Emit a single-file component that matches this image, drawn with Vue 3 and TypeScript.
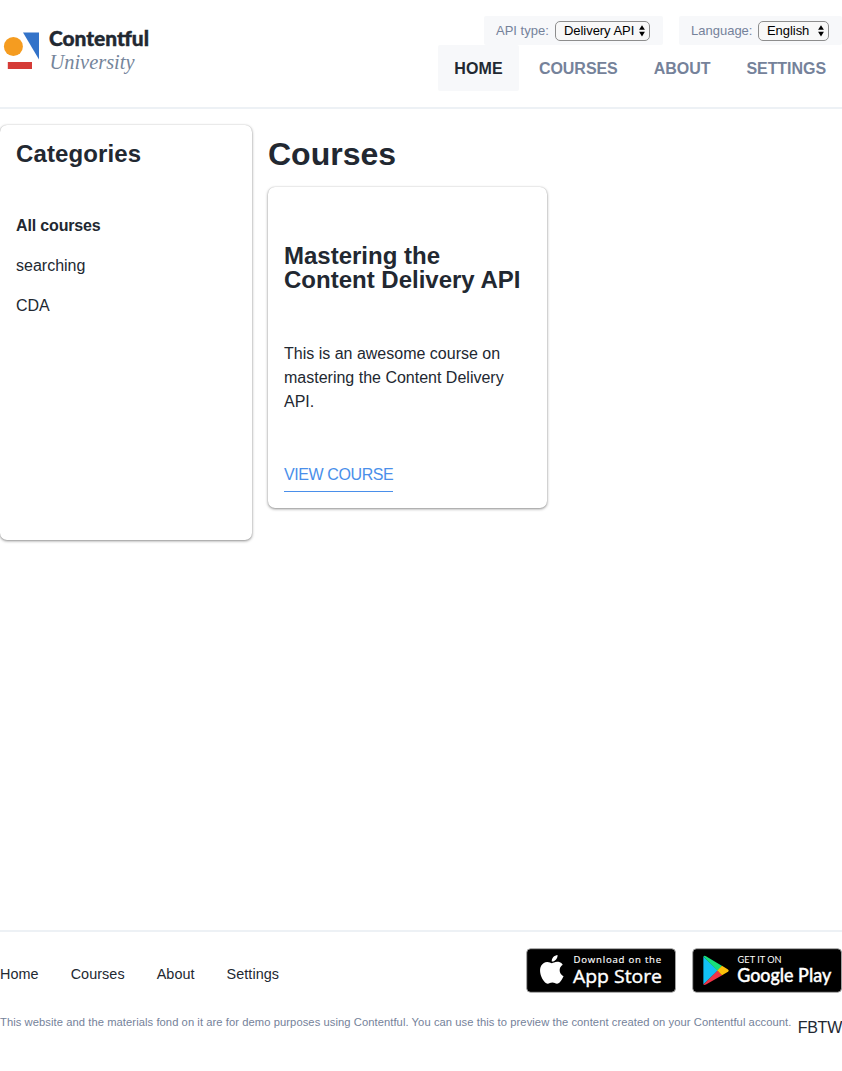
<script setup lang="ts">
interface NavLink {
  label: string
  active?: boolean
}

const navLinks: NavLink[] = [
  { label: 'HOME', active: true },
  { label: 'COURSES' },
  { label: 'ABOUT' },
  { label: 'SETTINGS' },
]

const pickers = [
  { label: 'API type:', value: 'Delivery API', kind: 'api' },
  { label: 'Language:', value: 'English', kind: 'language' },
]

const categories = [
  { label: 'All courses', active: true },
  { label: 'searching', active: false },
  { label: 'CDA', active: false },
]

const footerLinks: string[] = ['Home', 'Courses', 'About', 'Settings']
</script>

<template>
  <div class="page">
    <header class="header">
      <svg class="logo" width="152" height="50" viewBox="0 0 152 50">
        <circle cx="13.4" cy="20.5" r="9.5" fill="#f59c20" />
        <path d="M23 6.5H39V33.5Z" fill="#3373c9" />
        <rect x="7.8" y="36" width="24.2" height="7" fill="#d53b37" />
        <text class="logo-name" x="49" y="20" textLength="100" lengthAdjust="spacingAndGlyphs">Contentful</text>
        <text class="logo-sub" x="49.5" y="43" textLength="85" lengthAdjust="spacingAndGlyphs">University</text>
      </svg>
      <div class="header-right">
        <div class="pickers">
          <div v-for="p in pickers" :key="p.kind" class="picker" :class="p.kind">
            <span class="picker-label">{{ p.label }}</span>
            <button class="select">
              <span>{{ p.value }}</span>
              <svg width="6" height="12" viewBox="0 0 6 12"><path d="M3 0.2L5.9 4.8H0.1ZM3 11.4L0.1 6.8H5.9Z" /></svg>
            </button>
          </div>
        </div>
        <nav class="nav">
          <a v-for="l in navLinks" :key="l.label" :class="{ active: l.active }">{{ l.label }}</a>
        </nav>
      </div>
    </header>

    <main class="main">
      <aside class="sidebar">
        <h2>Categories</h2>
        <ul>
          <li v-for="c in categories" :key="c.label" :class="{ active: c.active }">{{ c.label }}</li>
        </ul>
      </aside>
      <section class="content">
        <h1>Courses</h1>
        <article class="card">
          <h2>Mastering the Content Delivery API</h2>
          <p>This is an awesome course on mastering the Content Delivery API.</p>
          <a class="view">VIEW COURSE</a>
        </article>
      </section>
    </main>

    <footer class="footer">
      <div class="footer-top">
        <nav class="footer-nav">
          <a v-for="l in footerLinks" :key="l">{{ l }}</a>
        </nav>
        <div class="badges">
          <svg width="150" height="45" viewBox="0 0 150 45">
            <rect x="0.7" y="0.7" width="148.8" height="43.6" rx="4" fill="#000" stroke="#a6a6a6" stroke-width="0.9" />
            <path
              transform="translate(11.4 6.9) scale(1.2)"
              fill="#fff"
              d="M12.152 6.896c-.948 0-2.415-1.078-3.96-1.04-2.04.027-3.91 1.183-4.961 3.014-2.117 3.675-.546 9.103 1.519 12.09 1.013 1.454 2.208 3.09 3.792 3.039 1.52-.065 2.09-.987 3.935-.987 1.831 0 2.35.987 3.96.948 1.637-.026 2.676-1.48 3.676-2.948 1.156-1.688 1.636-3.325 1.662-3.415-.039-.013-3.182-1.221-3.22-4.857-.026-3.04 2.48-4.494 2.597-4.559-1.429-2.09-3.623-2.324-4.39-2.376-2-.156-3.675 1.09-4.61 1.09zM15.53 3.83c.843-1.012 1.4-2.427 1.245-3.83-1.207.052-2.662.805-3.532 1.818-.78.896-1.454 2.338-1.273 3.714 1.338.104 2.715-.688 3.559-1.701"
            />
            <text class="apple-small" x="47.6" y="14.6" textLength="87.5">Download on the</text>
            <text class="apple-big" x="47" y="35.2" textLength="89" lengthAdjust="spacingAndGlyphs">App Store</text>
          </svg>
          <svg width="150" height="45" viewBox="0 0 150 45">
            <rect x="0.7" y="0.7" width="148.8" height="43.6" rx="4" fill="#000" stroke="#a6a6a6" stroke-width="0.9" />
            <path d="M11.4 8.4V36.6L26 22.5Z" fill="#12c0f5" />
            <path d="M11.4 8.4Q12.5 7.4 14 8.3L30.2 18L25.6 22.7Z" fill="#18e07a" />
            <path d="M11.4 36.6Q12.5 37.4 14 36.6L30.2 27.2L25.6 22.4Z" fill="#f03448" />
            <path d="M30 17.8L36 21.4Q37.6 22.6 36 23.7L30 27.3L25.3 22.5Z" fill="#fdc00a" />
            <text class="google-small" x="45.6" y="14.5" textLength="44">GET IT ON</text>
            <text class="google-big" x="45.2" y="34" textLength="94" lengthAdjust="spacingAndGlyphs">Google Play</text>
          </svg>
        </div>
      </div>
      <div class="footer-bottom">
        <p>This website and the materials fond on it are for demo purposes using Contentful. You can use this to preview the content created on your Contentful account.</p>
        <div class="social">FBTW</div>
      </div>
    </footer>
  </div>
</template>

<style>
body {
  margin: 0;
  background: #fff;
}
</style>

<style scoped>
.page {
  width: 842px;
  height: 1071px;
  display: flex;
  flex-direction: column;
  overflow: hidden;
  font: 16px/24px 'Liberation Sans', Arial, sans-serif;
  color: #222831;
  white-space: nowrap;
}
h1, h2, p, ul {
  margin: 0;
  padding: 0;
}
.header {
  box-sizing: border-box;
  height: 109px;
  padding-top: 16px;
  border-bottom: 2px solid #edf1f5;
  display: flex;
  justify-content: space-between;
}
.logo {
  margin-top: 10px;
}
.logo-name {
  font: 900 20px Lato, sans-serif;
  fill: #222831;
  stroke: #222831;
  stroke-width: 0.4;
}
.logo-sub {
  font: italic 21.5px 'Liberation Serif', serif;
  fill: #75859b;
}
.header-right {
  display: flex;
  flex-direction: column;
  align-items: flex-end;
}
.pickers {
  display: flex;
  gap: 16px;
}
.picker {
  box-sizing: border-box;
  height: 29px;
  padding: 0 13px 0 12px;
  display: flex;
  align-items: center;
  justify-content: space-between;
  background: #f7f8fa;
  border-radius: 2px;
  font-size: 13px;
  color: #75829a;
}
.api { width: 179px; }
.language { width: 163px; }
.select {
  box-sizing: border-box;
  height: 20px;
  width: 95px;
  margin: 1px 0 0;
  padding: 0 4px 1px 8px;
  display: flex;
  align-items: center;
  justify-content: space-between;
  border: 1px solid #8d8d8d;
  border-radius: 5px;
  background: #f8f8f8;
  color: #000;
  font: 13px 'Liberation Sans', Arial, sans-serif;
  letter-spacing: -0.05px;
}
.language .select { width: 71px; }
.nav {
  display: flex;
  gap: 4px;
}
.nav a {
  height: 46px;
  line-height: 48px;
  padding: 0 16px;
  border-radius: 2px;
  font-weight: 700;
  color: #75829a;
  letter-spacing: -0.05px;
}
.nav a.active {
  background: #f7f8fa;
  color: #222831;
  letter-spacing: 0.2px;
}
.main {
  display: flex;
  gap: 16px;
  height: 805px;
  padding-top: 16px;
}
.sidebar,
.card {
  box-sizing: border-box;
  border-radius: 7px;
  background: #fff;
  box-shadow: 0 1px 3px rgba(0, 0, 0, 0.45), 0 0 1px rgba(0, 0, 0, 0.2);
}
.sidebar {
  width: 252px;
  height: 415px;
  padding: 17px 16px 16px;
}
h2 {
  font-size: 24px;
  line-height: 24px;
}
.sidebar h2 {
  letter-spacing: 0.12px;
}
ul {
  margin-top: 40px;
  list-style: none;
}
li {
  line-height: 40px;
}
li.active {
  font-weight: 700;
  letter-spacing: -0.15px;
}
h1 {
  margin: 13px 0 17px;
  font-size: 32px;
  line-height: 32px;
}
.card {
  width: 279px;
  height: 321px;
  padding: 57px 16px 0;
  white-space: normal;
}
.card p {
  margin: 50px 0 43px;
}
.view {
  display: inline-block;
  height: 34px;
  line-height: 36px;
  border-bottom: 1px solid #4a8fea;
  color: #4a8fea;
  letter-spacing: -0.4px;
}
.footer {
  border-top: 2px solid #edf1f5;
  padding-top: 16px;
}
.footer-top {
  display: flex;
  justify-content: space-between;
}
.footer-nav {
  display: flex;
  gap: 32px;
  padding-top: 14px;
  font-size: 14.4px;
  letter-spacing: 0.06px;
}
.badges {
  display: flex;
  gap: 16px;
}
.apple-small {
  font: 9.6px 'Open Sans', sans-serif;
  fill: #fff;
  stroke: #fff;
  stroke-width: 0.15;
}
.apple-big {
  font: 500 18.8px 'Open Sans', sans-serif;
  fill: #fff;
  stroke: #fff;
  stroke-width: 0.4;
}
.google-small {
  font: 9.2px Lato, sans-serif;
  fill: #fff;
}
.google-big {
  font: 500 18.4px Lato, sans-serif;
  fill: #fff;
  stroke: #fff;
  stroke-width: 0.4;
}
.footer-bottom {
  display: flex;
  justify-content: space-between;
  padding-top: 17px;
}
.footer-bottom p {
  font-size: 11.2px;
  color: #75829a;
  letter-spacing: 0.07px;
}
.social {
  padding-top: 6px;
  letter-spacing: -0.25px;
}
</style>
